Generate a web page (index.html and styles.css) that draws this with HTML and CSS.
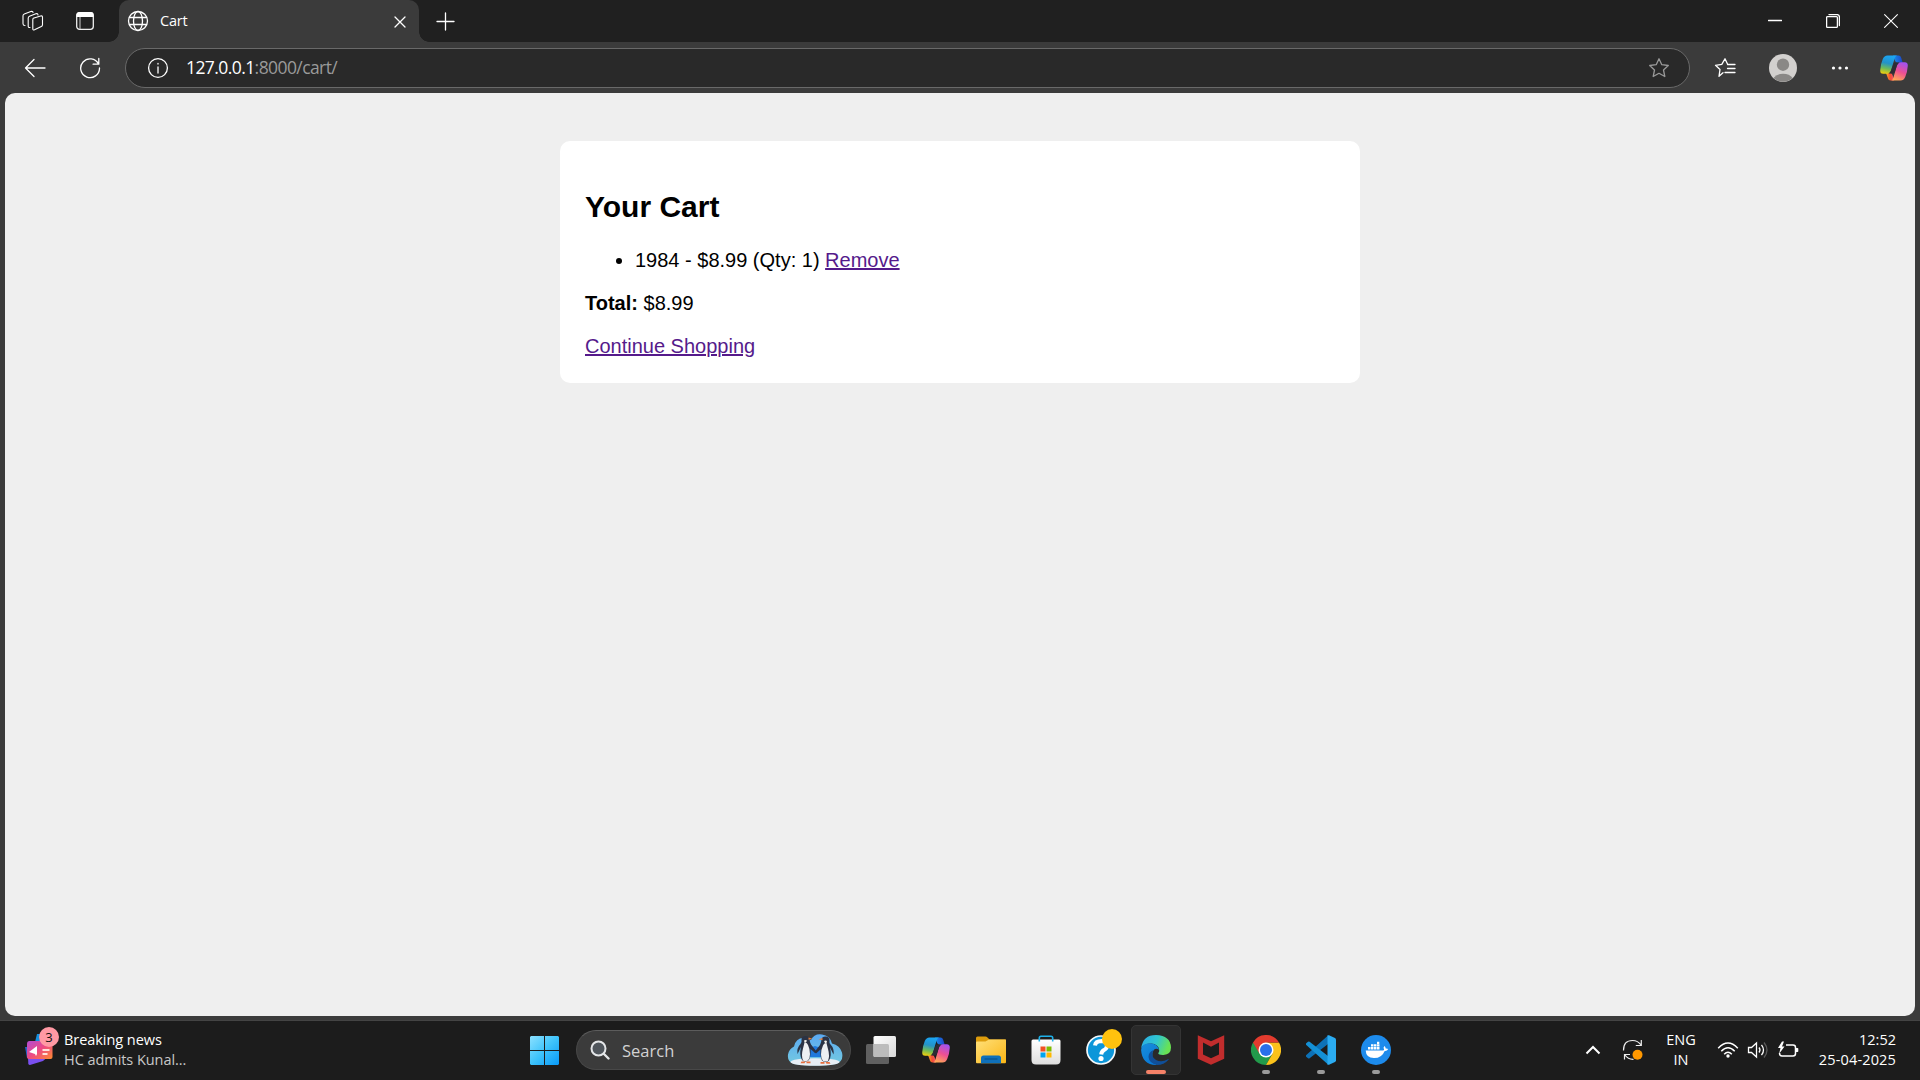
FILE: index.html
```html
<!DOCTYPE html>
<html lang="en">
<head>
<meta charset="utf-8">
<title>Cart</title>
<link rel="stylesheet" href="styles.css">
</head>
<body>
<svg class="defs" width="0" height="0" aria-hidden="true">
  <defs>
    <linearGradient id="cpA" x1="0.4" y1="0" x2="0.2" y2="1"><stop offset="0" stop-color="#1ba5f2"/><stop offset=".4" stop-color="#2492c8"/><stop offset=".7" stop-color="#6fbb58"/><stop offset="1" stop-color="#f5d00a"/></linearGradient>
    <linearGradient id="cpB" x1="0.7" y1="0" x2="0.3" y2="1"><stop offset="0" stop-color="#a252f0"/><stop offset=".5" stop-color="#ee4f93"/><stop offset="1" stop-color="#ffa955"/></linearGradient>
    <linearGradient id="cpC" x1="0" y1="0" x2="1" y2="0"><stop offset="0" stop-color="#1a8fec"/><stop offset="1" stop-color="#1b44c8"/></linearGradient>
    <linearGradient id="cpD" x1="0" y1="0" x2="1" y2="0"><stop offset="0" stop-color="#ffa62b"/><stop offset=".5" stop-color="#f4502f"/><stop offset="1" stop-color="#f0507a"/></linearGradient>
    <symbol id="copilot" viewBox="0 0 28 26">
      <path d="M13 .5h5.500q2 0 2.700 2.200l1.500 5h-5q-2 0-2.800-2.200z" fill="url(#cpC)"/>
      <path d="M6 18h4q2 0 2.600 2.300l1.600 5.200H10.500q-2 0-2.500-2z" fill="url(#cpD)"/>
      <path d="M7.500.5H17q-1.700.5-2.400 3L11 15.500q-1.200 3.300-4 3.300H3.200q-3.200 0-3-3.500Q.6 9 2.800 4 4.200.5 7.500.5z" fill="url(#cpA)"/>
      <path d="M20.500 25.500H11q1.700-.5 2.400-3L17 10.500q1.200-3.300 4-3.300h3.800q3.200 0 3 3.500-.4 6.300-2.600 11.300-1.400 3.500-4.700 3.500z" fill="url(#cpB)"/>
      <path d="M14 7.500h5.500q-2 1-2.800 3.500l-1.900 6q-.5 1.500-2 1.500H8.500q2-1 2.700-3.500z" fill="#2c2c35"/>
    </symbol>
  </defs>
</svg>
<div class="browser">
  <div class="tabstrip">
    <div class="slot slot-workspaces">
      <svg width="22" height="22" viewBox="0 0 22 22" class="line thin"><path d="M11.200 8.300 18.600 6q1.900-.5 1.900 1.300v7.500q0 1.300-1.200 1.700l-6.800 3.300q-1.700.7-1.700-1V10q0-1.300.4-1.700z"/><path d="M8 17.500q-1.800.4-1.800-1.400V8.200q0-1.500 1.300-2l6.300-2.400q2.100-.7 2.200 1.200"/><path d="M3 15.500Q1 15.500 1 13.700V5.800q0-1.400 1.300-1.900l6.500-2.400q2-.5 2.200 1"/></svg>
    </div>
    <div class="slot slot-actions">
      <svg width="20" height="20" viewBox="0 0 20 20"><rect x="1.700" y="1.700" width="16.600" height="16.600" rx="2.800" fill="none" stroke="#eee" stroke-width="1.300"/><path d="M1.500 6V4a3 3 0 0 1 3-3h11a3 3 0 0 1 3 3v2z" fill="#fff"/><path d="M5 6v12" stroke="#ccc"/></svg>
    </div>
    <div class="tab">
      <svg width="22" height="22" viewBox="0 0 22 22" class="line globe"><circle cx="11" cy="11" r="9.500"/><ellipse cx="11" cy="11" rx="4.500" ry="9.500"/><path d="M2.500 7.500h17M2.500 14.500h17"/></svg>
      <span class="tab-title">Cart</span>
      <svg width="12" height="12" viewBox="0 0 12 12" class="line tab-close"><path d="m1 1 10 10M11 1 1 11"/></svg>
    </div>
    <div class="slot slot-new"><svg width="19" height="19" viewBox="0 0 19 19" class="line"><path d="M9.500 1v17M1 9.500h17"/></svg></div>
    <div class="window-buttons">
      <svg width="14" height="14" viewBox="0 0 14 14" class="line"><path d="M.5 6.500h13"/></svg>
      <svg width="14" height="14" viewBox="0 0 14 14" class="line"><rect x=".6" y="2.600" width="10.800" height="10.800" rx="1"/><path d="M3 .6h8q2.400 0 2.400 2.400v8.500"/></svg>
      <svg width="14" height="14" viewBox="0 0 14 14" class="line thin"><path d="m.6.600 12.800 12.800M13.400.600.600 13.400"/></svg>
    </div>
  </div>
  <div class="toolbar">
    <div class="slot slot-back"><svg width="22" height="20" viewBox="0 0 22 20" class="line"><path d="M21 10H1.500M10 1.500 1.500 10l8.500 8.500"/></svg></div>
    <div class="slot slot-reload"><svg width="22" height="22" viewBox="0 0 22 22" class="line"><path d="M19.500 7A9.400 9.400 0 1 0 20.500 11M19.800 1.500v5.700h-5.700"/></svg></div>
    <div class="omnibox">
      <svg width="22" height="22" viewBox="0 0 22 22" class="line"><circle cx="11" cy="11" r="9.400"/><path d="M11 10v6M11 6.300v.7"/></svg>
      <span class="url"><b>127.0.0.1</b>:8000/cart/</span>
      <svg width="22" height="22" viewBox="0 0 22 22" class="line star"><path d="m11 1.800 2.800 5.900 6.500.8-4.800 4.500 1.300 6.500-5.800-3.200-5.800 3.200 1.300-6.500L1.700 8.500l6.500-.8z"/></svg>
    </div>
    <div class="slot slot-fav"><svg width="22" height="22" viewBox="0 0 22 22" class="line"><path d="M9 15.800 5 19.300l1-6.800L1.500 8.300l6.300-.9L11 1.700l2.600 5.600M13.500 7.500H21M13.500 11.500H21M11 15.500H21"/></svg></div>
    <div class="slot slot-avatar"><svg width="28" height="28" viewBox="0 0 28 28"><circle cx="14" cy="14" r="14" fill="#d2d0ce"/><circle cx="14" cy="10.700" r="6.200" fill="#8a8886"/><path d="M4.500 24a10.500 7.500 0 0 1 19 0A14 14 0 0 1 4.500 24z" fill="#8a8886"/></svg></div>
    <div class="slot slot-more"><svg width="18" height="6" viewBox="0 0 18 6" fill="#fff"><circle cx="2.500" cy="3" r="1.600"/><circle cx="9" cy="3" r="1.600"/><circle cx="15.500" cy="3" r="1.600"/></svg></div>
    <div class="slot slot-copilot"><svg width="28" height="26"><use href="#copilot"/></svg></div>
  </div>
  <main class="page">
    <section class="card">
      <h2>Your Cart</h2>
      <ul>
        <li>1984 - $8.99 (Qty: 1) <a href="#">Remove</a></li>
      </ul>
      <p><strong>Total:</strong> $8.99</p>
      <a href="#">Continue Shopping</a>
    </section>
  </main>
</div>
<footer class="taskbar">
  <div class="news">
    <div class="news-icon">
      <svg width="28" height="32" viewBox="0 0 28 32">
        <defs><linearGradient id="nw" x1="0" y1="0" x2="1" y2="1"><stop offset="0" stop-color="#b24bd6"/><stop offset=".5" stop-color="#ee4a82"/><stop offset="1" stop-color="#ff8b2e"/></linearGradient></defs>
        <path d="M12 0h9v8h-11z" fill="#1490df"/><path d="M0 13h6v11H2z" fill="#2864c8"/><path d="M3 23l22-2-7 6-13 4q-1.500 0-1.700-1.500z" fill="#7a4ff0"/>
        <path d="M4.500 7h21q2 0 2 2v14q0 2-2 2H4q-2 0-2-2V10q0-3 2.500-3z" fill="url(#nw)"/><path d="m4 18 8-6v8l-1 2-1-2z" fill="#fff"/><path d="M17.500 16h7M17.500 20h5" stroke="#ffe1da" stroke-width="2"/>
      </svg>
      <span class="badge">3</span>
    </div>
    <div class="news-text"><span>Breaking news</span><span class="dim">HC admits Kunal...</span></div>
  </div>
  <div class="apps">
    <svg class="start" width="29" height="29" viewBox="0 0 29 29"><defs><linearGradient id="win" gradientUnits="userSpaceOnUse" x1="0" y1="0" x2="29" y2="29"><stop offset="0" stop-color="#8ce1ff"/><stop offset=".5" stop-color="#3ec3fb"/><stop offset="1" stop-color="#0899f7"/></linearGradient></defs><path d="M1 0h13v14H0V1zM15 0h13l1 1v13H15zM0 15h14v14H1l-1-1zM15 15h14v13l-1 1H15z" fill="url(#win)"/></svg>
    <div class="search">
      <svg width="20" height="20" viewBox="0 0 20 20" fill="none" stroke="#e4e6e8" stroke-width="2" stroke-linecap="round"><circle cx="8.500" cy="8.500" r="7" fill="#50565c"/><path d="m14 14 4.500 4.500" stroke-width="2.400"/></svg>
      <span>Search</span>
      <svg class="penguins" width="56" height="34" viewBox="0 0 56 34">
        <defs><linearGradient id="ice" x1="0" y1="0" x2="0" y2="1"><stop offset="0" stop-color="#5aa9f2"/><stop offset="1" stop-color="#75cbe0"/></linearGradient></defs>
        <path d="M7 31Q0 29 1 21.500 2 16 7 13.500 9 4 18 5q3 .5 6 2Q27 .500 35 1.500q8 1 10 9 8 2 10 9 2 9-6 11.500-20 3-42 0z" fill="url(#ice)"/>
        <path d="M22 24V15l6-2 6 2v9z" fill="#1f78dc"/>
        <ellipse cx="28" cy="29" rx="24.500" ry="3.800" fill="#e7eef5"/>
        <g id="pg"><path d="M14.500 7q0-4 4-4 3.500 0 4 3 .2 3 1.500 5.500l5.500 7-1.500 1.500-4.500-4q.5 7-1.500 11-4 3-7 0-3-5-1-13l-3.500 7q-1-6 3-10 1.500-2 1-4z" fill="#2b3244"/><path d="M17.500 9.500q2.500-.5 3.500 2.500 2 4 2 9 0 4.500-2 6.500-3 1-5 0-2-5 0-12 .8-3 1.500-6z" fill="#edeff2"/><path d="M17 7.500q1.500-1.200 3 0l-1 2h-1.500z" fill="#f2efe8"/><path d="m21.500 4.500 4 1.300-4 1z" fill="#e27c3d"/><path d="M14.500 28.500h4l-1 1.700h-4zM19.500 28.500h4v1.700h-4z" fill="#e8703e"/></g>
        <use href="#pg" transform="translate(57 .5) scale(-1 1)"/>
      </svg>
    </div>
    <div class="app"><svg width="30" height="28" viewBox="0 0 30 28"><defs><linearGradient id="tv" x1="0" y1="0" x2="1" y2="1"><stop offset="0" stop-color="#fff"/><stop offset="1" stop-color="#d8d8d8"/></linearGradient></defs><rect y="8" width="23" height="20" rx="1.500" fill="#606060"/><rect x="7.500" width="22.500" height="21" rx="1.500" fill="url(#tv)"/><path d="M7.500 8H21.500q1.500 0 1.500 1.500V21H9q-1.500 0-1.500-1.500z" fill="#bcbcbc"/></svg></div>
    <div class="app"><svg width="28" height="26"><use href="#copilot"/></svg></div>
    <div class="app"><svg width="30" height="28" viewBox="0 0 30 28"><defs><linearGradient id="fo" x1="0" y1="0" x2="1" y2="1"><stop offset="0" stop-color="#ffe07a"/><stop offset="1" stop-color="#fbb615"/></linearGradient></defs><path d="M0 2q0-1.500 1.500-1.500h8q1 0 2 1l2 2H30V10H0z" fill="#dd9c0c"/><path d="M0 6.500q0-1 1-1h8.500L13 3.500h16q1 0 1 1V26q0 1.200-1 1.200H1q-1 0-1-1z" fill="url(#fo)"/><path d="M5 27.200V22q0-2.500 2.500-2.500h15Q25 19.500 25 22v5.200z" fill="#0f70ba"/><path d="M8.500 23h13" stroke="#084c84"/></svg></div>
    <div class="app"><svg width="30" height="30" viewBox="0 0 30 30"><defs><linearGradient id="st" x1="0" y1="0" x2="0" y2="1"><stop offset="0" stop-color="#fff"/><stop offset="1" stop-color="#dedede"/></linearGradient></defs><path d="M.5 6q0-1.500 1.500-1.500h26q1.500 0 1.500 1.500v19q0 4.500-4.500 4.500H5Q.5 29.500.5 25z" fill="url(#st)"/><path d="M8.300 6.500V3q0-1.800 1.700-1.800h10q1.700 0 1.700 1.800v3.500" fill="none" stroke="#1eb1ea" stroke-width="1.600"/><path d="M9.500 11.500h5v5h-5z" fill="#f25022"/><path d="M15.500 11.500h5v5h-5z" fill="#7fba00"/><path d="M9.500 17.500h5v5h-5z" fill="#00a4ef"/><path d="M15.500 17.500h5v5h-5z" fill="#ffb900"/></svg></div>
    <div class="app"><svg width="30" height="30" viewBox="0 0 30 30"><circle cx="15" cy="15" r="14" fill="#0c96d9" stroke="#f4f8fa" stroke-width="1.700"/><path d="M9 10.500Q9.500 6 15.500 6q5.500.2 5.500 4.700 0 2.600-3 4.400-2.500 1.400-2.800 4.400" fill="none" stroke="#fff" stroke-width="4"/><circle cx="15" cy="23.500" r="2.600" fill="#fff"/></svg><span class="dot"></span></div>
    <div class="app active"><svg width="30" height="30" viewBox="0 0 30 30"><defs><linearGradient id="e1" x1="0" y1="0" x2="1" y2=".3"><stop offset="0" stop-color="#2aa9e8"/><stop offset=".55" stop-color="#30c6cf"/><stop offset="1" stop-color="#68e254"/></linearGradient><linearGradient id="e2" x1="0" y1="0" x2=".6" y2="1"><stop offset="0" stop-color="#198edb"/><stop offset="1" stop-color="#0878d5"/></linearGradient></defs>
      <path d="M.2 13Q2 0 15 0q14.500.5 15 12.500 0 7-7.500 7.500-5 .2-5.300-1.700 1.300-1.300 1-3.300Q17.500 9 10 8.500 3 8.500.2 13z" fill="url(#e1)"/><path d="M.1 15Q0 8.500 9 8.300q7 .2 9.200 6.700-3-2.500-5.500 0-4.200 6 3 15H15Q1 29.500.1 15z" fill="url(#e2)"/><path d="M12.500 15q-3.500 6 2.500 10 5.500 3 12-.8 1-.4.500.6Q23 30 16 30q-8-2-8.500-8 0-5 5-7z" fill="#104f99"/></svg><span class="run wide"></span></div>
    <div class="app"><svg width="28" height="30" viewBox="0 0 28 30"><path d="m.8.300 13.200 6 13.200-6v23.400L14 29.700.8 23.700zM6 7.500v12l8 3.800 8-3.800v-12l-8 4.200z" fill="#c12d2d" fill-rule="evenodd"/></svg></div>
    <div class="app"><svg width="30" height="30" viewBox="0 0 30 30"><path d="M2 7.500A15 15 0 0 0 15 30l6.500-11.300L15 15z" fill="#229a4b"/><path d="M28 7.500A15 15 0 0 1 15 30l6.500-11.300L15 7.500z" fill="#fbc21b"/><path d="M15 7.500V15l-6.500 3.800L2 7.500A15 15 0 0 1 28 7.500z" fill="#e33b2e"/><circle cx="15" cy="15" r="7.500" fill="#fff"/><circle cx="15" cy="15" r="6" fill="#2a70ea"/></svg><span class="run"></span></div>
    <div class="app"><svg width="30" height="30" viewBox="0 0 30 30"><path d="M22 .5 0 20.300q-.5 1 .2 1.500l1.800 1.500q.8.600 1.600 0L22 9z" fill="#0d71b6"/><path d="M22 29.500 0 9.700q-.5-1 .2-1.500L2 6.700q.8-.6 1.600 0L22 21z" fill="#1490d5"/><path d="M21.500.300 23 .200l6 2.900q1 .5 1 1.600v20.600q0 1.100-1 1.600l-6 2.900-1.500-.1z" fill="#2bacf1"/></svg><span class="run"></span></div>
    <div class="app"><svg width="30" height="30" viewBox="0 0 30 30"><circle cx="15" cy="15" r="15" fill="#1d8bec"/><path d="M4.700 15.500h17q1.600-.2 1.400-1-1.300-2 .3-3.500 1.200.7 1.300 2.500 1.500-.2 2.500.5-.7 2-3.700 2.200Q21 23 13 23q-8 0-8.300-7.500zM7 12h2.500v2.500H7zM10 12h2.500v2.500H10zM13 12h2.500v2.500H13zM16 12h2.500v2.500H16zM10 9.300h2.500v2.300H10zM13 9.300h2.500v2.300H13zM16 9.300h2.500v2.300H16zM16 6.700h2.300v2.200H16z" fill="#fff"/></svg><span class="run"></span></div>
  </div>
  <div class="tray">
    <svg class="chevron" width="16" height="10" viewBox="0 0 16 10" fill="none" stroke="#fff" stroke-width="2"><path d="m1.500 8.500 6.500-6.500 6.500 6.500"/></svg>
    <svg class="update" width="22" height="22" viewBox="0 0 22 22" class="line"><g fill="none" stroke="#eee" stroke-width="1.200"><path d="M1.500 11.500Q1.500 1.500 10.500 1.500q5.500 0 8.500 4.500M19.300 1v5.500h-5.500M2.500 20.500v-5h5.500M3 16q3 4.500 8.500 4.300"/></g><circle cx="15.500" cy="15.800" r="5" fill="#ff9800"/></svg>
    <div class="lang"><span>ENG</span><span>IN</span></div>
    <svg class="wifi" width="22" height="18" viewBox="0 0 22 18" fill="none" stroke="#fff" stroke-width="1.500"><path d="M1.200 7.200q9.800-10.500 19.600 0M4.300 10.200q6.700-7 13.400 0M7.200 13.200q3.800-4 7.600 0"/><circle cx="11" cy="15" r="1.700" fill="#fff" stroke="none"/></svg>
    <svg class="sound" width="22" height="18" viewBox="0 0 22 18" fill="none" stroke="#fff" stroke-width="1.300"><path d="M1.500 6.500h3L9.500 2v14l-5-4.500h-3z"/><path d="M12 6.500q2 2.500 0 5M14.500 3.800q4 5.200 0 10.400"/><path d="M17 1.500q6 7.500 0 15" stroke="#5a5a5a"/></svg>
    <svg class="battery" width="22" height="18" viewBox="0 0 22 18"><path d="M9 4h7q2.500 0 2.500 2.500v6q0 2.500-2.500 2.500H5q-2.500 0-2.500-3" fill="none" stroke="#fff" stroke-width="1.500"/><path d="M19 7h1.500q.8 0 .8.800v2.400q0 .8-.8.800H19z" fill="#fff"/><path d="M5 .5 1 7h2.500L2 13l5.500-7.500H5L7 .5z" fill="#fff"/></svg>
    <div class="clock"><span>12:52</span><span class="date">25-04-2025</span></div>
  </div>
</footer>
</body>
</html>
```
FILE: styles.css
```css
* { box-sizing: border-box; }
body {
  margin: 0;
  width: 1920px;
  height: 1080px;
  overflow: hidden;
  display: flex;
  flex-direction: column;
  background: #1c1c1c;
  color: #fff;
  font-family: "Open Sans", "Noto Sans", sans-serif;
}
svg { display: block; flex: none; }
.defs { position: absolute; }
.line { fill: none; stroke: #fff; stroke-width: 1.3; stroke-linejoin: round; stroke-linecap: round; }
.thin { stroke-width: 1.1; }

/* browser window */
.browser {
  flex: none;
  height: 1021px;
  display: flex;
  flex-direction: column;
  background: #3b3b3b;
  border-bottom: 1px solid #444;
}
.tabstrip { height: 42px; display: flex; background: #202020; }
.slot { display: flex; align-items: center; justify-content: center; flex: none; }
.slot-workspaces { width: 65px; }
.slot-actions { width: 54px; padding-right: 14px; }
.tab {
  width: 300px;
  display: flex;
  align-items: center;
  padding: 0 13px 0 8px;
  background: #3b3b3b;
  border-radius: 10px 10px 0 0;
  position: relative;
}
.tab::before, .tab::after {
  content: "";
  position: absolute;
  bottom: 0;
  width: 10px;
  height: 10px;
}
.tab::before { left: -10px; background: radial-gradient(circle at 0 0, #202020 9.5px, #3b3b3b 10px); }
.tab::after { right: -10px; background: radial-gradient(circle at 100% 0, #202020 9.5px, #3b3b3b 10px); }
.tab-title { margin-left: 11px; padding-bottom: 2px; font-size: 14.5px; letter-spacing: -.2px; flex: 1; }
.tab-close { margin-top: 1px; }
.slot-new { width: 53px; }
.window-buttons { margin-left: auto; display: flex; align-items: center; gap: 44px; padding-right: 22px; }

.toolbar { height: 51px; display: flex; align-items: center; }
.slot-back { width: 70px; }
.slot-reload { width: 40px; }
.omnibox {
  width: 1565px;
  height: 40px;
  margin-left: 15px;
  border: 1px solid #696969;
  border-radius: 20px;
  background: #292929;
  display: flex;
  align-items: center;
  padding: 0 19px 0 21px;
}
.url { margin-left: 17px; padding-bottom: 2px; flex: 1; font-size: 17.5px; letter-spacing: -.58px; color: #9a9a9a; }
.url b { font-weight: 400; color: #fff; }
.star { stroke: #999; }
.slot-fav { width: 70px; }
.slot-avatar { width: 46px; }
.slot-more { width: 67px; }
.slot-copilot { width: 41px; }

/* cart page */
.page {
  height: 923px;
  margin: 0 5px;
  padding-top: 48px;
  border-radius: 10px;
  background: #efefef;
  font: 20px "Liberation Sans", Arial, sans-serif;
  color: #000;
}
.card { width: 800px; margin: 0 auto; padding: 25px; background: #fff; border-radius: 10px; }
.card h2 { font-size: 30px; line-height: 34px; margin: 24px 0 25px; }
.card ul { margin: 20px 0; padding-left: 50px; }
.card p { margin: 20px 0; }
.card a { color: #551a8b; }

/* taskbar */
.taskbar { height: 59px; display: flex; padding-bottom: 1px; }
.news { width: 530px; display: flex; align-items: center; padding-left: 25px; }
.news-icon { position: relative; width: 39px; }
.badge {
  position: absolute;
  left: 14px;
  top: -7px;
  width: 20px;
  height: 20px;
  border-radius: 50%;
  background: #ff99a4;
  color: #111;
  font-size: 13px;
  line-height: 20px;
  text-align: center;
}
.news-text { display: flex; flex-direction: column; padding-bottom: 1px; font-size: 14.5px; line-height: 20px; letter-spacing: -.05px; }
.dim { color: #c8c8c8; }
.apps { display: flex; align-items: center; }
.search {
  width: 275px;
  height: 40px;
  margin: 0 5px 0 17px;
  border: 1px solid #484848;
  border-top-color: #5c5c5c;
  border-radius: 20px;
  background: #3b3b3b;
  display: flex;
  align-items: center;
  padding: 0 7px 0 13px;
}
.search span { flex: 1; margin-left: 12px; font-size: 16.5px; color: #d2d2d2; }
.app {
  width: 50px;
  height: 50px;
  margin-right: 5px;
  border-radius: 5px;
  display: flex;
  align-items: center;
  justify-content: center;
  position: relative;
}
.app.active { background: #2a2a2a; border: 1px solid #343434; }
.run { position: absolute; bottom: 1px; width: 8px; height: 4px; border-radius: 2px; background: #9a9a9a; }
.run.wide { bottom: 0; width: 20px; background: #f58268; }
.dot { position: absolute; left: 26px; top: 4px; width: 20px; height: 20px; border-radius: 50%; background: #ffc20e; }
.tray { margin-left: auto; display: flex; align-items: center; padding-right: 24px; font-size: 14.5px; line-height: 20px; }
.chevron { margin-right: 21px; }
.update { margin-right: 20px; }
.lang { width: 34px; margin-right: 19px; display: flex; flex-direction: column; align-items: center; }
.wifi { margin-right: 8px; }
.sound { margin-right: 8px; }
.clock { width: 97px; padding-bottom: 1px; display: flex; flex-direction: column; align-items: flex-end; }
.date { letter-spacing: .15px; }
```
